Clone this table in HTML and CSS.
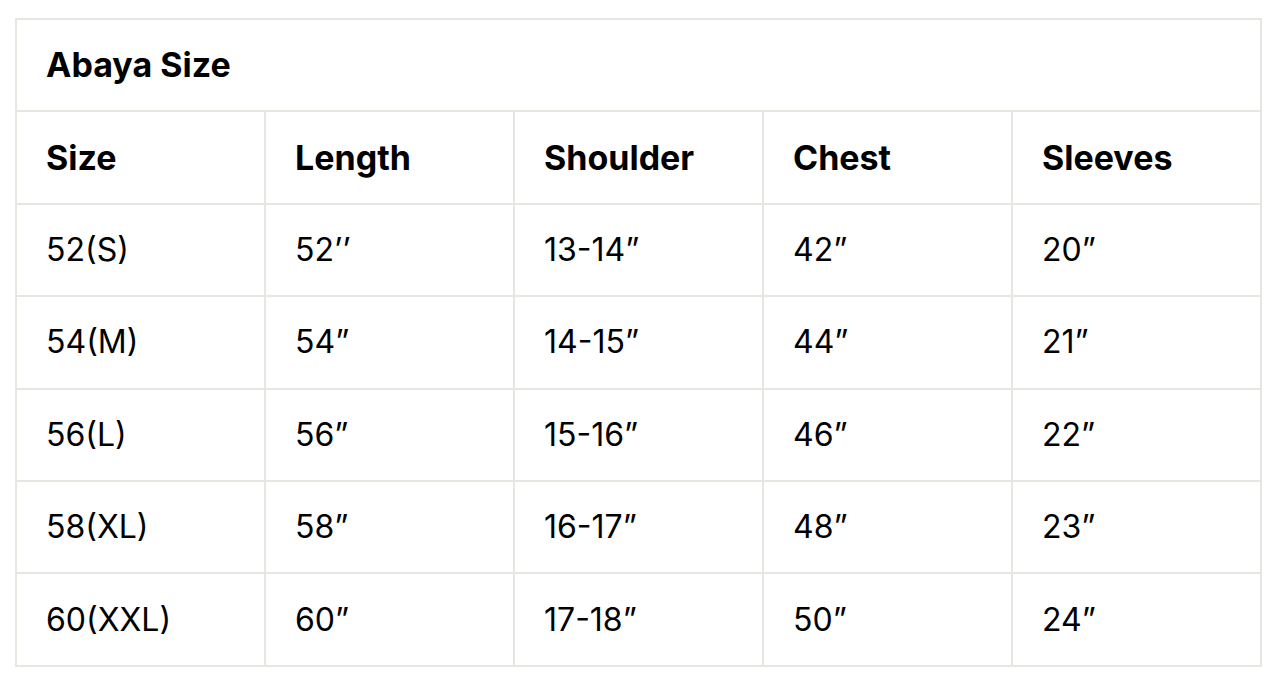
FILE: index.html
```html
<!DOCTYPE html>
<html>
<head>
<meta charset="utf-8">
<link rel="stylesheet" href="styles.css">
</head>
<body>
<table class="size-table">
  <tr class="title-row"><th colspan="5">Abaya Size</th></tr>
  <tr class="head-row"><th>Size</th><th>Length</th><th>Shoulder</th><th>Chest</th><th>Sleeves</th></tr>
  <tr><td>52(S)</td><td>52’’</td><td>13-14”</td><td>42”</td><td>20”</td></tr>
  <tr><td>54(M)</td><td>54”</td><td>14-15”</td><td>44”</td><td>21”</td></tr>
  <tr><td>56(L)</td><td>56”</td><td>15-16”</td><td>46”</td><td>22”</td></tr>
  <tr><td>58(XL)</td><td>58”</td><td>16-17”</td><td>48”</td><td>23”</td></tr>
  <tr><td>60(XXL)</td><td>60”</td><td>17-18”</td><td>50”</td><td>24”</td></tr>
</table>
</body>
</html>
```
FILE: styles.css
```css
html, body {
  margin: 0;
  padding: 0;
  background: #ffffff;
}
body {
  padding: 18px 0 0 15px;
  font-family: "Inter", "Liberation Sans", sans-serif;
  color: #000000;
}
.size-table {
  border-collapse: collapse;
  width: 1247px;
  table-layout: fixed;
}
.size-table th,
.size-table td {
  border: 2px solid #e7e6e0;
  height: 90.4px;
  padding: 0 0 0 29px;
  text-align: left;
  vertical-align: middle;
  line-height: 1;
}
.size-table th {
  font-weight: 700;
  font-size: 34px;
}
.size-table td {
  font-weight: 400;
  font-size: 32px;
}
```
